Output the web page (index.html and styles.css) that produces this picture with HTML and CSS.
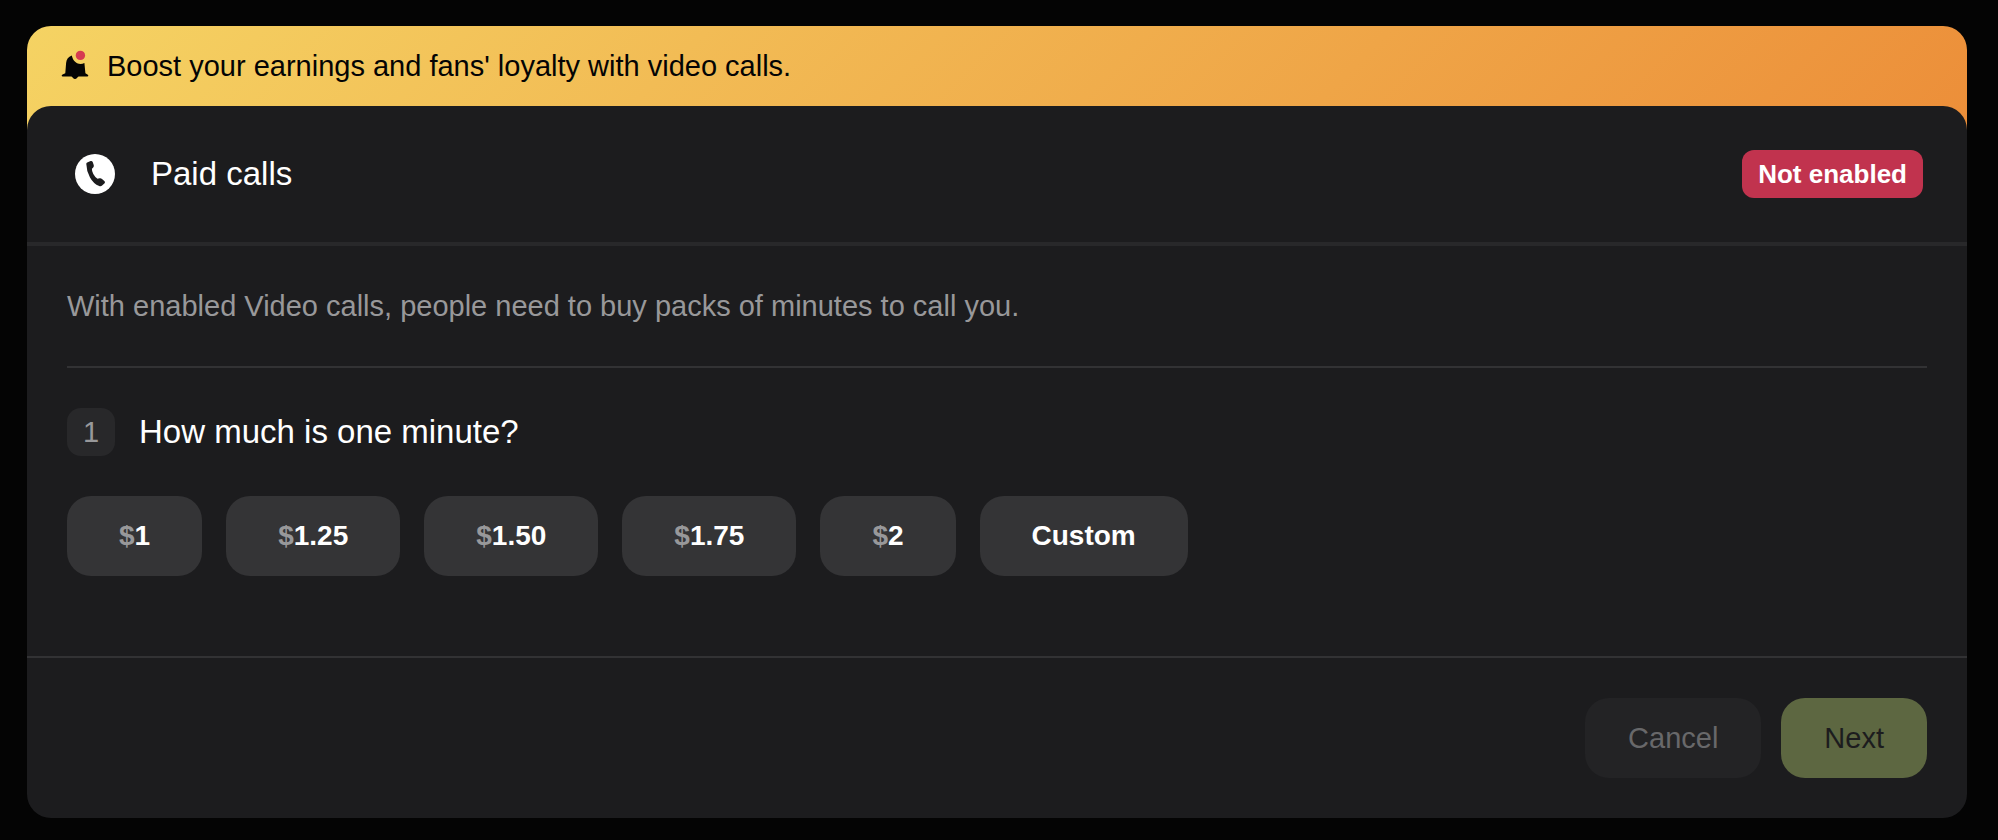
FILE: index.html
```
<!DOCTYPE html>
<html lang="en">
<head>
<meta charset="UTF-8" />
<meta name="viewport" content="width=device-width, initial-scale=1" />
<title>Paid calls</title>
<link rel="stylesheet" href="styles.css">
</head>
<body>

<main class="promo">
  <p class="promo-text">
    <svg class="bell" viewBox="0 0 28 32" aria-hidden="true">
      <path d="M10.8 5.6C7.4 6.8 5.4 9.4 5.1 13L4.3 23.2L1.6 24.4Q0.7 24.8 0.7 25.6Q0.7 26.5 1.8 26.5H10.4Q11.2 26.9 11.8 27.8Q14 30.4 16.2 27.8Q16.8 26.9 17.6 26.5H26.2Q27.3 26.5 27.3 25.6Q27.3 24.8 26.4 24.4L24.4 23.2L23.4 13A8.4 8.4 0 0 1 11.4 7.6Q11 6.6 10.8 5.6Z" fill="#040404"/>
      <circle cx="19.4" cy="5.4" r="4.7" fill="#d63b51"/>
    </svg>
    Boost your earnings and fans' loyalty with video calls.
  </p>

  <section class="card">
    <header class="card-header">
      <svg class="phone" viewBox="0 0 40 40" aria-hidden="true">
        <circle cx="20" cy="20" r="20" fill="#fff"/>
        <path d="M12.2 8.4L15.6 7.1Q17 6.6 17.7 7.9L18.8 11.3Q19 13 18 13.7L16.9 14.8Q16.8 17.6 18.3 20.1Q20 23.3 22.5 24.7L24.6 24.3Q26 24 27 25L29.6 27.2Q30.4 28.2 29.6 29.2L27.1 31.6Q25.8 32.6 24.2 32Q18.4 29.6 15 23.4Q11.4 16.8 11.3 10Q11.3 8.8 12.2 8.4Z" fill="#1c1c1e"/>
      </svg>
      <h1>Paid calls</h1>
      <span class="status">Not enabled</span>
    </header>

    <div class="card-body">
      <p class="description">With enabled Video calls, people need to buy packs of minutes to call you.</p>

      <div class="step">
        <span class="step-number">1</span>
        <h2>How much is one minute?</h2>
      </div>

      <div class="prices">
        <button type="button"><span>$</span>1</button>
        <button type="button"><span>$</span>1.25</button>
        <button type="button"><span>$</span>1.50</button>
        <button type="button"><span>$</span>1.75</button>
        <button type="button"><span>$</span>2</button>
        <button type="button">Custom</button>
      </div>
    </div>

    <footer class="card-footer">
      <button type="button" class="cancel-btn" disabled>Cancel</button>
      <button type="button" class="next-btn" disabled>Next</button>
    </footer>
  </section>
</main>

</body>
</html>
```

FILE: styles.css
```
* { box-sizing: border-box; }
body {
  margin: 0; padding: 26px 31px 22px 27px; background: #040404; color: #fff;
  font-family: "Helvetica Neue", "Liberation Sans", Arial, sans-serif;
  font-size: 29px; line-height: 40px;
}
h1, h2, p { margin: 0; font-size: 33px; font-weight: 500; }
button {
  height: 80px; border: none; border-radius: 24px;
  font: inherit; cursor: pointer;
}
button:disabled { cursor: default; }

/* the gradient only has to reach behind the card's top corners */
.promo {
  border-radius: 24px;
  background: linear-gradient(135deg, #f5d363, #ec8e39) no-repeat;
  background-size: 100% 110px;
}
.promo-text {
  display: flex; align-items: center; gap: 18px;
  padding: 20px 34px; color: #040404; font-size: 29px;
}
.bell { width: 28px; height: 32px; }

.card {
  background: #1c1c1e; border-radius: 24px;
}
.card-header {
  display: flex; align-items: center; gap: 36px;
  padding: 44px 44px 44px 48px; border-bottom: 4px solid #28282a;
}
.phone { width: 40px; height: 40px; }
.status {
  margin-left: auto; padding: 4px 16px; border-radius: 12px;
  background: #c1334e; font-size: 26px; font-weight: bold;
}

.card-body { padding: 0 40px 80px; }
.description {
  padding: 40px 0; border-bottom: 2px solid #323234;
  color: #98989a; font-size: 29px;
}
.step {
  display: flex; align-items: center; gap: 24px;
  padding: 40px 0;
}
.step-number {
  width: 48px; padding: 4px 0; border-radius: 14px;
  background: #28282a; color: #98989a; text-align: center;
}
.prices {
  display: flex; flex-wrap: wrap; gap: 24px;
}
.prices button {
  padding: 0 52px; background: #343436; color: #fff;
  font-size: 28px; font-weight: bold;
}
.prices span { color: #98989a; }

.card-footer {
  display: flex; justify-content: flex-end; gap: 20px;
  padding: 40px; border-top: 2px solid #323234;
}
.card-footer button { padding: 0 43px; }
.cancel-btn { background: #232325; color: #68686a; }
.next-btn { background: #5d6741; color: #1c1c1e; }
```
